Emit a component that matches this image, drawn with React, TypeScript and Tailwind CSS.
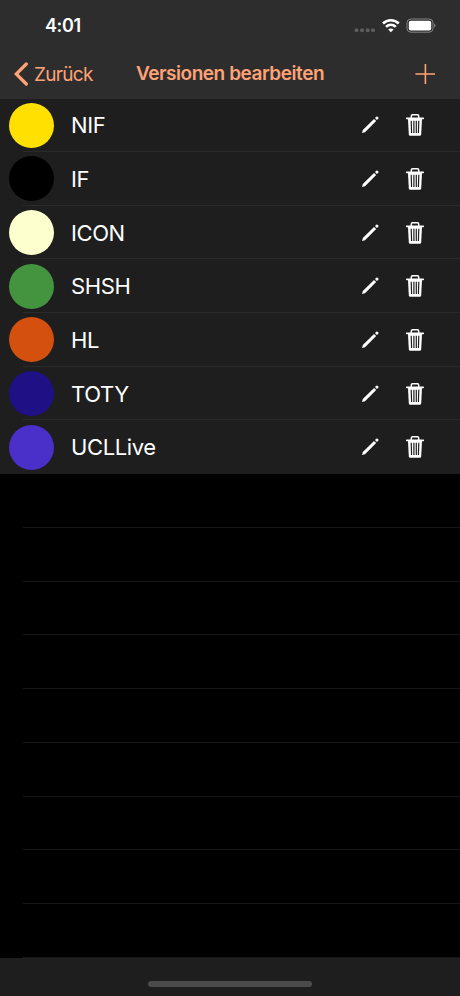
import React from "react";

const versions = [
  { name: "NIF", color: "bg-[#ffe000]" },
  { name: "IF", color: "bg-black" },
  { name: "ICON", color: "bg-[#feffcf]" },
  { name: "SHSH", color: "bg-[#43933f]" },
  { name: "HL", color: "bg-[#d3500e]" },
  { name: "TOTY", color: "bg-[#201086]" },
  { name: "UCLLive", color: "bg-[#4a2fc9]" },
];

const PencilIcon = () => (
  <svg className="h-6 w-6" viewBox="0 0 24 24" fill="#fff" aria-hidden="true">
    <path d="M4 20.100l.8-3L16 5.900l2.200 2.200L7 19.200z" />
    <circle cx="18.900" cy="5.100" r="1.600" />
  </svg>
);

const TrashIcon = () => (
  <svg className="h-6 w-5" viewBox="0 0 20 24" aria-hidden="true">
    <path d="M6.300 5V3c0-.8.400-1.200 1.200-1.200h5c.8 0 1.200.4 1.200 1.200v2" fill="none" stroke="#fff" strokeWidth="1.500" />
    <rect x="1" y="4.500" width="18" height="1.700" rx=".6" fill="#fff" />
    <path d="M3 6h14l-.8 15.600c-.1.800-.6 1.200-1.300 1.200H5.100c-.7 0-1.200-.4-1.300-1.200z" fill="#fff" />
    <path d="M6.200 7.700l.4 12.300M8.900 7.700v12.300M11.300 7.700v12.300M13.800 7.700l-.4 12.300" fill="none" stroke="#1e1e1e" strokeWidth="1.200" />
  </svg>
);

const StatusBar = () => (
  <div className="flex h-[51px] items-center justify-between pl-[45px] pr-[24px]">
    <span className="pt-px text-[18px] font-semibold leading-none tracking-[-0.4px] text-white">4:01</span>
    <svg className="h-5 w-[82px]" viewBox="0 0 82 20" fill="none" aria-hidden="true">
      <g fill="#5c5c5c">
        <circle cx="2.500" cy="14.300" r="2" />
        <circle cx="8" cy="14.300" r="2" />
        <circle cx="13.700" cy="14.300" r="2" />
        <circle cx="19" cy="14.300" r="2" />
      </g>
      <g stroke="#fff" strokeWidth="2.600">
        <path d="M29 7.500c4.500-4.300 11.300-4.300 15.800 0" />
        <path d="M32 10.900c2.900-2.700 6.900-2.700 9.800 0" />
      </g>
      <path d="M34.200 13.500c1.600-1.300 3.800-1.300 5.400 0L36.900 16.300z" fill="#fff" />
      <rect x="53" y="3" width="26" height="13.200" rx="3.800" stroke="#858585" />
      <rect x="54.800" y="4.800" width="22.400" height="9.600" rx="2" fill="#fff" />
      <path d="M80.200 7.500v4.200c1.700-.7 1.700-3.500 0-4.200z" fill="#858585" />
    </svg>
  </div>
);

const NavBar = () => (
  <nav className="grid h-[46px] grid-cols-[120px_1fr_120px] items-center text-[#ffa275]">
    <button className="flex items-center gap-[6px] pl-[14px] text-[19px] leading-6 tracking-[-0.7px]">
      <svg className="h-6 w-[14px]" viewBox="0 0 14 24" fill="none" aria-hidden="true">
        <path d="M12.300 2L2.200 12l10.100 10" stroke="currentColor" strokeWidth="3.200" strokeLinecap="round" />
      </svg>
      <span className="pt-px">Zurück</span>
    </button>
    <h1 className="whitespace-nowrap text-center text-[19px] font-semibold leading-6 tracking-[-0.45px]">
      Versionen bearbeiten
    </h1>
    <button className="justify-self-end pr-[25px]" aria-label="Hinzufügen">
      <svg className="h-5 w-5" viewBox="0 0 20 20" aria-hidden="true">
        <path d="M10.400 0v20M.4 10H20" stroke="currentColor" strokeWidth="1.600" />
      </svg>
    </button>
  </nav>
);

export default function App() {
  return (
    <div className="flex h-[996px] w-[460px] flex-col overflow-hidden bg-black font-['Inter',sans-serif]">
      <header className="h-[98.5px] shrink-0 bg-[#2d2d2d]">
        <StatusBar />
        <NavBar />
      </header>
      <ul className="grid h-[375.5px] shrink-0 grid-rows-7 bg-[#1e1e1e]">
        {versions.map((version) => (
          <li key={version.name} className="flex items-center bg-[length:calc(100%-23px)_1px] bg-right-bottom bg-no-repeat pl-[9px] pr-[35px] [&:not(:last-child)]:bg-[linear-gradient(#2a2a2a,#2a2a2a)]">
            <span className={`h-[45px] w-[45px] rounded-full ${version.color}`} />
            <span className="ml-[17px] flex-1 text-[22px] leading-7 tracking-[-0.4px] text-white">{version.name}</span>
            <button aria-label="Bearbeiten" className="mr-[23px]">
              <PencilIcon />
            </button>
            <button aria-label="Löschen">
              <TrashIcon />
            </button>
          </li>
        ))}
      </ul>
      <div className="grid flex-1 grid-rows-9 pl-[23px]">
        {Array.from({ length: 9 }, (_, i) => (
          <div key={i} className="border-b border-[#161616]" />
        ))}
      </div>
      <footer className="flex h-[38px] shrink-0 justify-center bg-[#1e1e1e] pt-[23px]">
        <div className="h-[6px] w-[164px] rounded-full bg-[#4b4b4b]" />
      </footer>
    </div>
  );
}
